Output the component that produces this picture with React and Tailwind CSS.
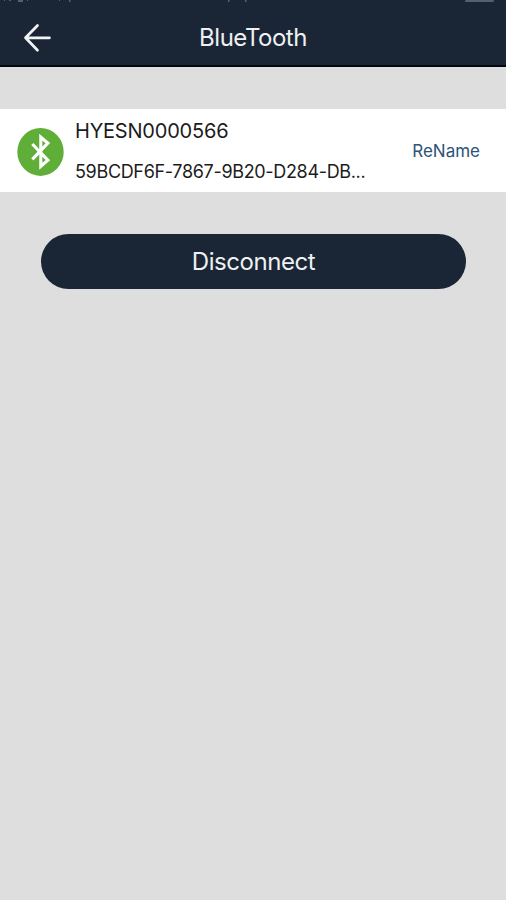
import { useState } from "react";

const device = {
  name: "HYESN0000566",
  id: "59BCDF6F-7867-9B20-D284-DB...",
};

function StatusBar() {
  return (
    <svg className="block h-[3px] w-full" viewBox="0 0 506 3">
      <g fill="#56606d">
        <rect x="4" y="0" width="1" height="1" />
        <rect x="9" y="0" width="2" height="1" />
        <rect x="18" y="0" width="5" height="2" />
        <rect x="27" y="0" width="1" height="1" />
        <rect x="59" y="0" width="1" height="1" />
        <rect x="69" y="0" width="1.5" height="2" />
        <rect x="228" y="0" width="1.5" height="2" />
        <rect x="245" y="0" width="1.5" height="2" />
        <rect x="465" y="0" width="29" height="2" rx="1" />
      </g>
    </svg>
  );
}

function BackArrow() {
  return (
    <svg
      width="28"
      height="30"
      viewBox="0 0 28 30"
      fill="none"
      stroke="#f1f3f5"
      strokeWidth="2.7"
      strokeLinecap="round"
      strokeLinejoin="round"
    >
      <path d="M14.5 2.5 2.5 14.8 14.5 27.3M2.5 14.8H26.5" />
    </svg>
  );
}

function BluetoothBadge() {
  return (
    <svg width="47" height="49" viewBox="0 0 47 49" fill="none">
      <ellipse cx="23.5" cy="24.9" rx="23.2" ry="24" fill="#5fae37" />
      <path
        d="M15.3 17 30.9 33.2 23.8 39.3V10.1L30.9 16.2 15.3 32.4"
        stroke="#fff"
        strokeWidth="3.1"
      />
    </svg>
  );
}

function App() {
  const [connected, setConnected] = useState(true);

  return (
    <main className="min-h-screen bg-[#dedede] font-['Inter',sans-serif]">
      {/* Header */}
      <header className="h-[67px] border-b-2 border-[#03070f] bg-[#1a2535]">
        <StatusBar />
        <div className="grid grid-cols-[76px_1fr_76px] items-center pt-5">
          <button className="pl-[23px]" aria-label="Back">
            <BackArrow />
          </button>
          <h1 className="text-center text-2xl leading-[30px] tracking-[-0.5px] text-[#eef0f2]">
            BlueTooth
          </h1>
        </div>
      </header>

      {/* Device row */}
      <section className="mt-[42px] flex h-[83px] items-center bg-white pt-[2px] pr-[26px] pl-[17px]">
        <BluetoothBadge />
        <div className="ml-[11px] flex-1 whitespace-nowrap text-[#1c1c1c]">
          <p className="text-xl leading-[41px] tracking-[-0.2px]">
            {device.name}
          </p>
          <p className="text-lg leading-[40px] tracking-[-0.33px]">
            {device.id}
          </p>
        </div>
        <button className="text-[17px] text-[#2d5379]">ReName</button>
      </section>

      <div className="pt-[42px] pr-10 pl-[41px]">
        <button
          className="h-[55px] w-full rounded-full bg-[#1a2535] text-2xl tracking-[-0.45px] text-[#eef0f2]"
          onClick={() => setConnected(!connected)}
        >
          {connected ? "Disconnect" : "Connect"}
        </button>
      </div>
    </main>
  );
}

export default App;
